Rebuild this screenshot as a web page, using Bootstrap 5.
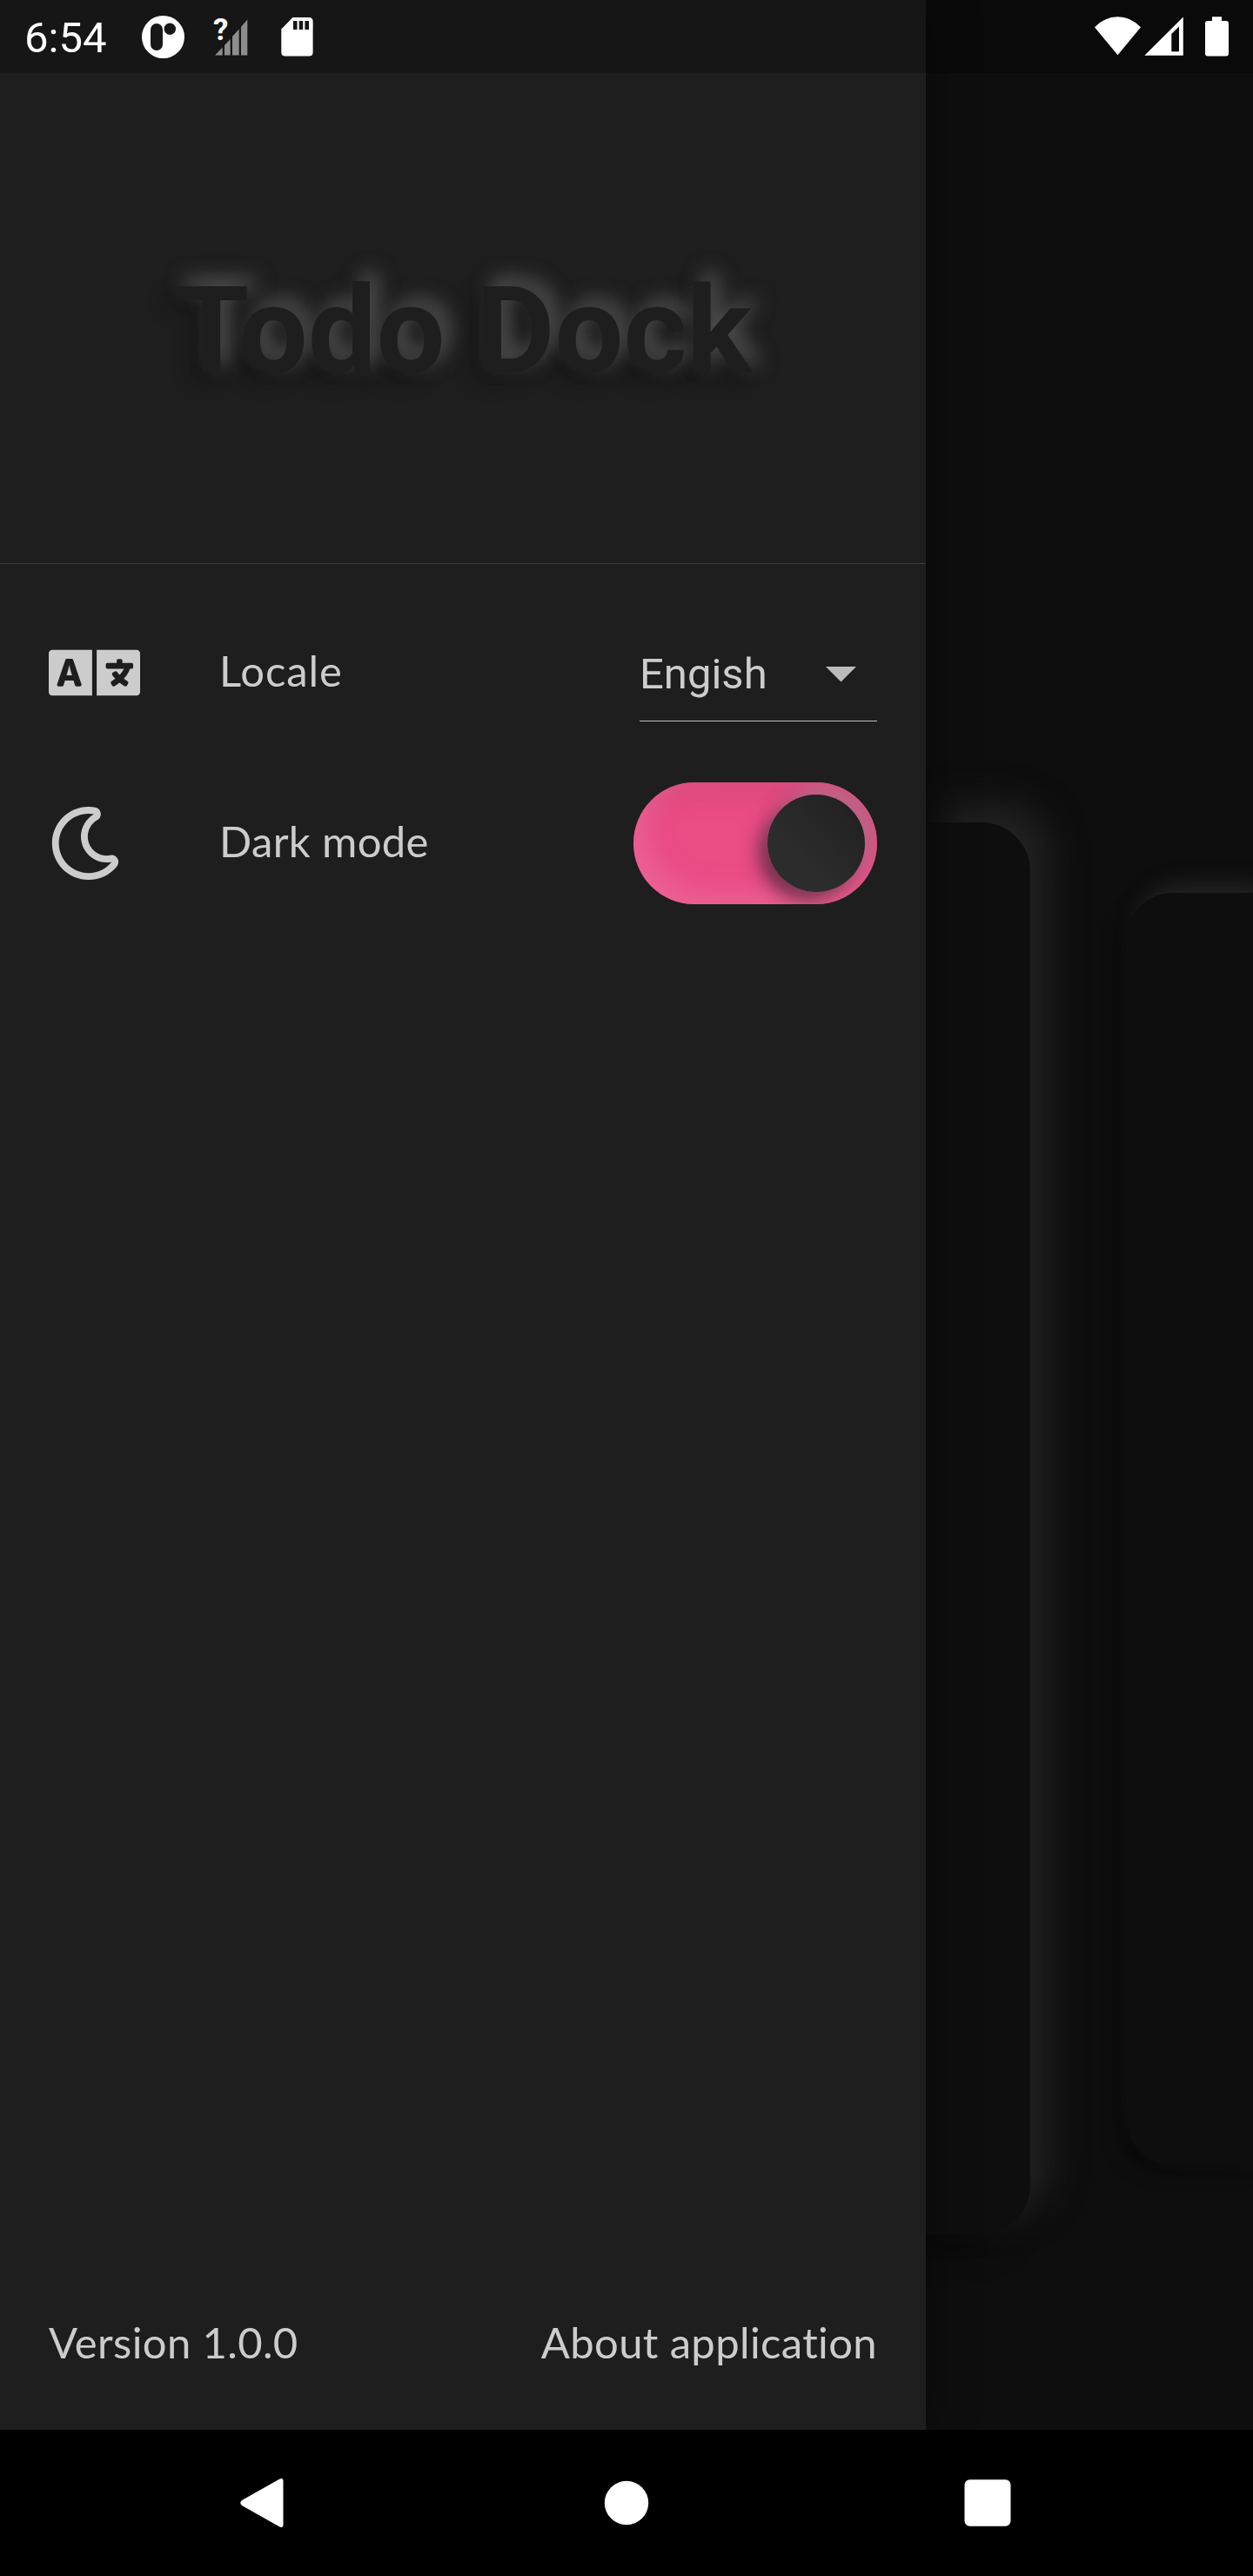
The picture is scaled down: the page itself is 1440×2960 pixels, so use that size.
<!DOCTYPE html>
<html lang="en">
<head>
<meta charset="utf-8">
<meta name="viewport" content="width=device-width, initial-scale=1">
<title>Todo Dock</title>
<link rel="stylesheet" href="https://cdn.jsdelivr.net/npm/bootstrap@5.3.0/dist/css/bootstrap.min.css">
<style>
  html, body { margin: 0; background: #000; }
  .phone { width: 1440px; height: 2960px; background: #000; font-family: Lato, "Open Sans", sans-serif; color: #cccccc; line-height: 1; }
  .stage { height: 2792px; background: #0e0e0e; }
  .drawer { width: 1064px; background: #1e1e1e; box-shadow: 0 0 56px rgba(0,0,0,.4); z-index: 2; }
  .statusbar { top: 0; left: 0; width: 1440px; height: 84px; background: rgba(0,0,0,.25); z-index: 3; }
  .clock { font: 400 49px/58px Roboto, sans-serif; color: #fff; width: 135px; padding-left: 28px; padding-top: 3px; }
  .brand { height: 648px; border-bottom: 1px solid #3a3a3a; padding-top: 84px; }
  .brand h1 { font: 700 140px/164px Roboto, sans-serif; color: #1e1e1e; margin: 0; padding-top: 28px;
    text-shadow: 10px -10px 22px rgba(84,84,84,.95), -10px 10px 22px rgba(12,12,12,.42); }
  .settings { padding: 27px 56px 0; }
  .setting { height: 196px; }
  .icon-cell { width: 196px; }
  .label-text { font-size: 49px; line-height: 60px; letter-spacing: .35px; font-variant-ligatures: none; padding-bottom: 6px; }
  .label-wide { letter-spacing: .9px; }
  .picker { width: 273px; height: 112px; border-bottom: 1px solid #c0c0c0; font: 400 49px/58px Roboto, sans-serif; padding-top: 4px; }
  .toggle { width: 280px; height: 140px; border-radius: 70px; background: #ea4c84; padding: 14px;
    box-shadow: inset 14px -14px 28px rgba(240,120,165,.5), inset -14px 14px 28px rgba(190,70,110,.4); overflow: hidden; }
  .knob { width: 112px; height: 112px; border-radius: 50%; background: linear-gradient(225deg, #1f1f1f, #2c2c2c 65%);
    box-shadow: 10px -10px 20px rgba(160,130,145,.55), -10px 10px 20px rgba(40,30,40,.6); }
  .footer-row { padding: 0 56px 65px; }
  .peek { padding-top: 945px; width: 376px; overflow: hidden; }
  .page-card { width: 120px; height: 1622px; border-radius: 0 56px 56px 0; background: #0e0e0e;
    box-shadow: 21px -21px 42px rgba(36,36,36,.95), -18px 18px 42px rgba(0,0,0,.3); }
  .next-card { width: 145px; height: 1461px; margin-top: 81px; border-radius: 52px 0 0 52px; background: #0e0e0e;
    box-shadow: 10px -10px 22px rgba(40,40,40,.85), -10px 10px 22px rgba(0,0,0,.3); }
  .navbar-keys { height: 168px; background: #000; }
  svg { display: block; flex: none; }
</style>
<script src="https://cdn.jsdelivr.net/npm/bootstrap@5.3.0/dist/js/bootstrap.bundle.min.js"></script>
</head>
<body>
<div class="phone d-flex flex-column position-relative overflow-hidden">
  <header class="statusbar position-absolute d-flex">
    <div class="clock d-flex align-items-center"><span>6:54</span></div>
    <svg width="265" height="84" viewBox="135 0 265 84">
      <circle cx="187.5" cy="42.5" r="24.5" fill="#fff"/>
      <rect x="173" y="27" width="14" height="31" rx="7" fill="#171717"/>
      <circle cx="195.3" cy="33.3" r="6.7" fill="#171717"/>
      <g fill="#8d8d8d">
        <path d="M247 63.500L255.700 54.500V63.500Z"/>
        <path d="M258 52L264.700 45V63.500H258Z"/>
        <path d="M267 42L274.700 33.500V63.500H267Z"/>
        <path d="M277 31L284.300 22.500V63.500H277Z"/>
      </g>
      <text x="245" y="46" font-family="Roboto" font-weight="700" font-size="35" fill="#fff">?</text>
      <path d="M336.500 20H355Q359.600 20 359.600 24.500V60Q359.600 64.500 355 64.500H328Q323.300 64.500 323.300 60V33.500Z" fill="#fff"/>
      <path d="M337 24H341.500V34H337ZM343.700 24H348.200V34H343.700ZM350.400 24H355V34H350.400Z" fill="#171717"/>
    </svg>
    <svg class="ms-auto" width="190" height="84" viewBox="1250 0 190 84" fill="#fff">
      <path d="M1258 31.200Q1270 19.300 1284.500 19.300Q1299 19.300 1311 31.200L1284.500 63.300Z"/>
      <path fill-rule="evenodd" d="M1315.300 63.700L1359.800 19.500V63.700ZM1346.300 39V59.200H1355V30.500Z"/>
      <path d="M1393 19.300H1404V24H1409Q1412 24 1412 27V61.500Q1412 64.500 1409 64.500H1388Q1385 64.500 1385 61.500V27Q1385 24 1388 24H1393Z"/>
    </svg>
  </header>

  <main class="stage d-flex">
    <aside class="drawer d-flex flex-column position-relative flex-shrink-0">
      <div class="brand d-flex align-items-center justify-content-center"><h1>Todo Dock</h1></div>
      <div class="settings">
        <div class="setting d-flex align-items-center">
          <div class="icon-cell">
            <svg width="105" height="84" viewBox="0 0 640 512" fill="#cccccc"><path d="M152.100 236.200c-3.500-12.100-7.800-33.200-7.800-33.200h-.5s-4.300 21.100-7.800 33.200l-11.100 37.500H163zM616 96H336v320h280c13.300 0 24-10.700 24-24V120c0-13.300-10.700-24-24-24zm-24 120c0 6.600-5.400 12-12 12h-11.400c-6.900 23.600-21.700 47.400-42.700 69.900 8.400 6.400 17.100 12.500 26.100 18 5.500 3.400 7.300 10.500 4.100 16.200l-7.900 13.900c-3.400 5.900-10.900 7.800-16.700 4.300-12.600-7.800-24.500-16.100-35.400-24.900-10.900 8.700-22.700 17.100-35.400 24.900-5.800 3.500-13.300 1.600-16.700-4.300l-7.900-13.900c-3.200-5.600-1.400-12.800 4.200-16.200 9.300-5.700 18-11.700 26.100-18-7.900-8.400-14.900-17-21-25.700-4-5.700-2.200-13.600 3.700-17.100l6.500-3.900 7.300-4.300c5.400-3.200 12.400-1.700 16 3.400 5 7 10.800 14 17.400 20.900 13.500-14.200 23.800-28.900 30-43.200H412c-6.600 0-12-5.400-12-12v-16c0-6.600 5.400-12 12-12h64v-16c0-6.600 5.400-12 12-12h16c6.600 0 12 5.400 12 12v16h64c6.600 0 12 5.400 12 12zM0 120v272c0 13.300 10.700 24 24 24h280V96H24c-13.300 0-24 10.700-24 24zm58.900 216.100L116.400 167c1.700-4.900 6.200-8.100 11.400-8.100h32.500c5.100 0 9.700 3.300 11.400 8.100l57.500 169.100c2.600 7.800-3.100 15.900-11.400 15.900h-22.900a12 12 0 0 1-11.500-8.600l-9.400-31.900h-60.200l-9.100 31.800c-1.500 5.100-6.200 8.700-11.500 8.700H70.300c-8.200 0-14-8.100-11.400-15.900z"/></svg>
          </div>
          <span class="label-text label-wide">Locale</span>
          <div class="picker ms-auto d-flex align-items-center justify-content-between">
            <span>Engish</span>
            <svg class="me-4" width="35" height="18" viewBox="0 0 35 18"><path d="M0 0H35L17.500 17.500Z" fill="#bbbbbb"/></svg>
          </div>
        </div>
        <div class="setting d-flex align-items-center">
          <div class="icon-cell">
            <svg width="84" height="84" viewBox="0 0 512 512" fill="#cccccc"><path d="M279.135 512c78.756 0 150.982-35.804 198.844-94.775 28.270-34.831-2.558-85.722-46.249-77.401-82.348 15.683-158.272-47.268-158.272-130.792 0-48.424 26.060-92.292 67.434-115.836 38.745-22.050 28.999-80.788-15.022-88.919A257.936 257.936 0 0 0 279.135 0c-141.360 0-256 114.575-256 256 0 141.360 114.576 256 256 256zm0-464c12.985 0 25.689 1.201 38.016 3.478-54.760 31.163-91.693 90.042-91.693 157.554 0 113.848 103.641 199.200 215.252 177.944C402.574 433.964 344.366 464 279.135 464c-114.875 0-208-93.125-208-208s93.125-208 208-208z"/></svg>
          </div>
          <span class="label-text">Dark mode</span>
          <div class="toggle ms-auto d-flex justify-content-end"><div class="knob"></div></div>
        </div>
      </div>
      <div class="footer-row mt-auto d-flex justify-content-between">
        <span class="label-text">Version 1.0.0</span>
        <span class="label-text">About application</span>
      </div>
    </aside>
    <section class="peek d-flex justify-content-between align-items-start">
      <div class="page-card"></div>
      <div class="next-card"></div>
    </section>
  </main>

  <nav class="navbar-keys">
    <svg width="1440" height="168" viewBox="0 2792 1440 168" fill="#fff">
      <path d="M278 2873L320.500 2849Q325.500 2846.500 325.500 2851V2901Q325.500 2905.500 320.500 2903L278 2879Q274.500 2876 278 2873Z"/>
      <circle cx="720" cy="2876" r="25.200"/>
      <rect x="1108.500" y="2849.300" width="53" height="53.400" rx="6"/>
    </svg>
  </nav>
</div>
</body>
</html>
